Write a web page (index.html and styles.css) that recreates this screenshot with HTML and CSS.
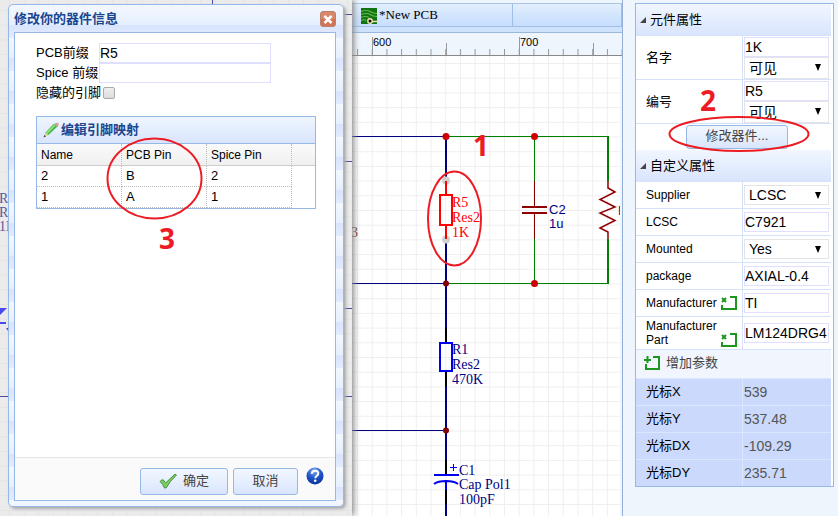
FILE: index.html
```html
<!DOCTYPE html>
<html lang="zh-CN">
<head>
<meta charset="utf-8">
<title>New PCB</title>
<link rel="stylesheet" href="styles.css">
</head>
<body>
<div class="app">
  <div class="backdrop">
    <svg class="sheet" aria-hidden="true">
      <defs>
        <pattern id="gridGray" x="9" y="10" width="14.7" height="14.7" patternUnits="userSpaceOnUse"><path d="M0 .5H15M.5 0V15" stroke="#e4e4e4" fill="none"/></pattern>
      </defs>
      <rect width="100%" height="100%" fill="url(#gridGray)"/>
      <g stroke="#4a4aa4" fill="none"><path d="M212.500 0V5M340 14.500H352M340 161.500H352M340 308.500H352M0 396.500H9M340 396.500H352"/></g>
      <path d="M0 308H7L0 315ZM0 322H6V324H0ZM6 328l2 3V328z" fill="#4a4af0"/>
      <g class="serif" fill="#5a5aa0"><text x="-1" y="203">R3</text><text x="-1" y="217">Res2</text><text x="-1" y="231">1K</text></g>
    </svg>

    <form class="dialog">
      <header class="dialog-head">
        <h1>修改你的器件信息</h1>
        <button class="close" type="button" aria-label="关闭">
          <svg width="16" height="16" viewBox="0 0 16 16"><rect x=".5" y=".5" width="15" height="15" rx="2.500" fill="#d9876b" stroke="#b9806c"/><path d="M1 8h14v5q0 2-2 2H3q-2 0-2-2z" fill="#cf6847" opacity=".6"/><path d="M4.500 5l7 7M11.500 5l-7 7" stroke="#fff" stroke-width="2.600"/></svg>
        </button>
      </header>
      <div class="dialog-body">
        <div class="dialog-content">
          <div class="field"><label for="pcb">PCB前缀</label><input id="pcb" type="text" value="R5"></div>
          <div class="field"><label for="spice">Spice 前缀</label><input id="spice" type="text"></div>
          <div class="field check"><label for="hide">隐藏的引脚</label><input id="hide" type="checkbox"></div>
          <section class="pins">
            <h2>
              <svg width="16" height="16" viewBox="0 0 16 16"><path d="M1 15l1.500-4.500L10.500 2l3.500-.500L15 4 6 12.500z" fill="#48b648"/><path d="M3 10.500L11.500 2l1.500 1L4.500 12z" fill="#8fe07a"/><path d="M12 1.500l3-1 .8 2.500-1.800 2z" fill="#d9a097"/><path d="M1 15l1.500-4.500L5.500 13z" fill="#d9dba0"/><path d="M.5 15.500l1-2.500 1.500 1.500z" fill="#444"/></svg>
              编辑引脚映射
            </h2>
            <table>
              <thead><tr><th>Name</th><th>PCB Pin</th><th>Spice Pin</th><th class="rest"></th></tr></thead>
              <tbody>
                <tr><td>2</td><td>B</td><td>2</td><td class="rest"></td></tr>
                <tr><td>1</td><td>A</td><td>1</td><td class="rest"></td></tr>
              </tbody>
            </table>
          </section>
        </div>
        <footer class="dialog-foot">
          <button class="btn ok" type="button"><svg width="18" height="16" viewBox="0 0 18 16"><path d="M1 8.500Q3 6 4.500 7L6.500 10 16 1.200 17.500 2Q11 8 7 15H5.500Q4 11 1 8.500z" fill="#7ccd62" stroke="#47913f"/></svg>确定</button>
          <button class="btn cancel" type="button">取消</button>
          <button class="help" type="button" aria-label="帮助">
            <svg width="18" height="18" viewBox="0 0 18 18"><defs><radialGradient id="ball" cx=".45" cy=".2" r=".8"><stop offset="0" stop-color="#8fb2ee"/><stop offset=".5" stop-color="#2158cc"/><stop offset="1" stop-color="#0a3298"/></radialGradient></defs><circle cx="9" cy="9" r="8.500" fill="url(#ball)"/><path d="M5.800 6.800Q6 3.800 9.200 3.800T12.300 6.600Q12.300 8 10.800 8.900T9.300 11.200" fill="none" stroke="#fff" stroke-width="2"/><circle cx="9.200" cy="13.700" r="1.300" fill="#fff"/></svg>
          </button>
        </footer>
      </div>
    </form>
  </div>

  <main class="editor">
    <nav class="tabs">
      <a class="tab" href="#pcb-sheet">
        <svg width="16" height="16" viewBox="0 0 16 16"><path d="M0 0h16v16H0z" fill="#127312"/><path d="M0 3.500q6-2 9 0t7 2M0 6.500q6-2 9 0t7 2M0 9.500q5-2 8 0M0 12.500q3-1.500 5 0" fill="none" stroke="#64b84c" stroke-width="1.200"/><circle cx="9" cy="13" r="2.200" fill="#111" stroke="#f2e6b8" stroke-width="1.400"/><path d="M11 13.500h5" stroke="#f2e6b8" stroke-width="1.400"/></svg>
        <span>*New PCB</span>
      </a>
      <span class="tab-space"></span>
    </nav>
    <svg class="ruler" aria-hidden="true">
      <defs><pattern id="ticks" x="5" y="0" width="14.7" height="22" patternUnits="userSpaceOnUse"><path d="M.5 16V22" stroke="#999"/></pattern></defs>
      <rect width="100%" height="22" fill="url(#ticks)"/>
      <path d="M20.500 4V22M167.500 4V22M94.500 10V22M241.500 10V22" stroke="#999"/>
      <text x="21" y="13">600</text><text x="168" y="13">700</text>
    </svg>
    <svg class="schematic" id="pcb-sheet">
      <defs>
        <pattern id="grid" x="5" y="7" width="14.7" height="14.7" patternUnits="userSpaceOnUse"><path d="M0 .5H15M.5 0V15" stroke="#efefef" fill="none"/></pattern>
      </defs>
      <rect width="100%" height="100%" fill="url(#grid)"/>
      <g transform="translate(-352 -56)" fill="none">
        <path d="M352 136.500H446M352 283.500H446M352 430.500H446" stroke="#000080"/>
        <path d="M446 136V181M446 239V328M446 385V460M446 503V516" stroke="#000080" stroke-width="2"/>
        <path d="M446 136.500H608M446 283.500H608M534.500 136V182M534.500 239V283" stroke="#008000"/>
        <path d="M608 136V181M608 239V284" stroke="#008000" stroke-width="2"/>
        <circle cx="446" cy="180.500" r="4" fill="#d0d0d0"/><circle cx="446" cy="239.500" r="4" fill="#d0d0d0"/>
        <path d="M446 181V195M446 225V239M440 195H452V225H440Z" stroke="#f00" stroke-width="2"/>
        <path d="M534.500 181V207M534.500 213V239" stroke="#800000"/>
        <path d="M522 207H547M522 213H547" stroke="#900000" stroke-width="2"/>
        <path d="M608 181V188L615 192 600 199.500 615 207 600 213 615 220.500 600 228 608 232V239" stroke="#900000" stroke-width="1.500"/>
        <path d="M446 328V343M446 371V386M446 460V474M446 490V504" stroke="#000" stroke-width="2"/>
        <path d="M440 343H452V371H440ZM434 475H459M446 481V490M434 484Q438 481 446 481T458 484" stroke="#0000f0" stroke-width="2"/>
        <path d="M450 467.500H457M453.500 464V471" stroke="#0000f0"/>
        <g fill="#c00"><circle cx="446" cy="136.500" r="3.500"/><circle cx="534.500" cy="136.500" r="3.500"/><circle cx="534.500" cy="283.500" r="3.500"/></g>
        <g fill="#800000"><circle cx="446" cy="283.500" r="3"/><circle cx="446" cy="430.500" r="3"/></g>
        <g class="serif" fill="#f00"><text x="452" y="207">R5</text><text x="452" y="222">Res2</text><text x="452" y="237">1K</text></g>
        <g class="serif" fill="#000080"><text x="452" y="354">R1</text><text x="452" y="369">Res2</text><text x="452" y="384">470K</text><text x="459" y="475">C1</text><text x="459" y="489">Cap Pol1</text><text x="459" y="504">100pF</text></g>
        <text class="serif" x="351" y="237" fill="#804020">3</text>
        <g class="sans" fill="#000080"><text x="549" y="214">C2</text><text x="549" y="228">1u</text><text x="618" y="215" fill="#800040">R</text></g>
      </g>
    </svg>
  </main>

  <aside class="side">
    <form class="props">
      <h2 class="group"><i class="caret"></i>元件属性</h2>
      <div class="row pair">
        <label for="name">名字</label>
        <div class="value"><input id="name" type="text" value="1K"><span class="select"><select aria-label="名字可见"><option>可见</option></select></span></div>
      </div>
      <div class="row pair">
        <label for="num">编号</label>
        <div class="value"><input id="num" type="text" value="R5"><span class="select"><select aria-label="编号可见"><option>可见</option></select></span></div>
      </div>
      <div class="action"><button class="btn modify" type="button">修改器件...</button></div>
      <h2 class="group"><i class="caret"></i>自定义属性</h2>
      <div class="row"><label for="sup">Supplier</label><div class="value"><span class="select"><select id="sup"><option>LCSC</option></select></span></div></div>
      <div class="row"><label for="lcsc">LCSC</label><div class="value"><input id="lcsc" type="text" value="C7921"></div></div>
      <div class="row"><label for="mnt">Mounted</label><div class="value"><span class="select"><select id="mnt"><option>Yes</option></select></span></div></div>
      <div class="row"><label for="pkg">package</label><div class="value"><input id="pkg" type="text" value="AXIAL-0.4"></div></div>
      <div class="row"><label for="man">Manufacturer<svg class="mark" width="16" height="14" viewBox="0 0 16 14"><path d="M1 9V13H15V1H9M1 2l4 4M5 2L1 6" fill="none" stroke="#1c961c" stroke-width="2"/></svg></label><div class="value"><input id="man" type="text" value="TI"></div></div>
      <div class="row tall"><label for="part"><span>Manufacturer Part</span><svg class="mark" width="16" height="14" viewBox="0 0 16 14"><path d="M1 9V13H15V1H9M1 2l4 4M5 2L1 6" fill="none" stroke="#1c961c" stroke-width="2"/></svg></label><div class="value"><input id="part" type="text" value="LM124DRG4"></div></div>
      <button class="add" type="button"><svg width="16" height="14" viewBox="0 0 16 14"><path d="M2 8V13H15V1H9M0 4H7M3.500 0V7" fill="none" stroke="#1c961c" stroke-width="2"/></svg>增加参数</button>
      <div class="row cursor"><span class="key">光标X</span><output>539</output></div>
      <div class="row cursor"><span class="key">光标Y</span><output>537.48</output></div>
      <div class="row cursor"><span class="key">光标DX</span><output>-109.29</output></div>
      <div class="row cursor"><span class="key">光标DY</span><output>235.71</output></div>
    </form>
  </aside>

  <svg class="notes">
    <g fill="none" stroke="#ed1c24" stroke-width="2"><ellipse cx="454.500" cy="218.500" rx="26.500" ry="47"/><ellipse cx="739" cy="134" rx="69.500" ry="17"/><ellipse cx="154.500" cy="178.500" rx="47" ry="40"/></g>
    <text x="473" y="156">1</text><text x="700" y="111">2</text><text x="159" y="249">3</text>
  </svg>
</div>
</body>
</html>
```
FILE: styles.css
```css
* { box-sizing: border-box; }
body { margin: 0; background: #eef5fd; color: #000; font: 12px/16px "Liberation Sans", "Noto Sans CJK SC", sans-serif; }
h1, h2 { margin: 0; font-size: 13px; }
input, select, button { margin: 0; font-family: inherit; color: inherit; }
button { padding: 0; border: 0; background: none; }
svg { display: block; flex: none; }

.app { position: relative; display: grid; grid-template-columns: 352px 1fr 215px; min-height: 100vh; overflow: hidden; }
.serif { font: 14px "Liberation Serif", serif; }
.sans { font: 13px "Liberation Sans", sans-serif; }

/* Dimmed sheet behind the dialog */
.backdrop { position: relative; z-index: 1; background: #ebebeb; box-shadow: 2px 0 6px #888; }
.sheet { position: absolute; inset: 0; width: 100%; height: 100%; }

.dialog { position: absolute; top: 4px; right: 8px; bottom: 9px; left: 8px; display: flex; flex-direction: column; padding: 0 7px 5px 5px; border: 1px solid #95b8e7; border-radius: 5px; background: linear-gradient(#f3f8ff, #e6effe 60%, #d8e4fd 61%, #e2ebff) 0 0 / 100% 33px; box-shadow: 2px 2px 3px #aaa; }
.dialog-head { display: flex; align-items: center; justify-content: space-between; height: 27px; color: #1a4690; }
.dialog-head h1 { padding-top: 1px; }
.close { height: 16px; }
.dialog-body { flex: 1; display: flex; flex-direction: column; border: 1px solid #95b8e7; background: #fff; }
.dialog-content { flex: 1; padding: 10px 19px 0 21px; }
.field { display: grid; grid-template-columns: 63px 172px; align-items: center; height: 20px; font-size: 13px; }
.field label { white-space: nowrap; }
.field input[type="text"] { width: 172px; height: 20px; padding: 0; border: 1px solid #dfdfff; background: #fff; font-size: 14px; }
.field.check { display: flex; gap: 2px; }
.field input[type="checkbox"] { appearance: none; width: 12px; height: 12px; border: 1px solid #aaa; border-radius: 2px; background: linear-gradient(#eee, #dcdcdc); }

.pins { margin-top: 13px; border: 1px solid #95b8e7; }
.pins h2 { display: flex; align-items: center; gap: 2px; height: 27px; padding-left: 6px; border-bottom: 1px solid #95b8e7; background: linear-gradient(#eff6ff, #d9e5fd); color: #1a4690; }
.pins table { width: 100%; border-collapse: separate; border-spacing: 0; table-layout: fixed; }
.pins th, .pins td { width: 85px; height: 22px; padding: 0 4px; border-right: 1px dotted #bbb; border-bottom: 1px dotted #bbb; text-align: left; font-weight: 400; }
.pins th { border-bottom: 1px solid #ccc; background: linear-gradient(#fafafa, #f0f0f0); }
.pins td { height: 21px; font-size: 13px; }
.pins .rest { width: auto; border-right: 0; }
.pins td.rest { border-bottom: 0; }

.dialog-foot { display: flex; align-items: flex-start; height: 43px; padding: 10px 11px 0; border-top: 1px solid #e6e6e6; background: #fafafa; justify-content: flex-end; }
.btn { display: flex; align-items: center; justify-content: center; height: 27px; border: 1px solid #95b8e7; border-radius: 3px; background: linear-gradient(#f2f7ff, #e6effe 50%, #d9e5fd); color: #444; font-size: 13px; line-height: 16px; padding-bottom: 2px; }
.ok { width: 88px; gap: 6px; margin-right: 5px; }
.cancel { width: 65px; }
.help { height: 18px; margin: -1px 0 0 8px; }

/* Editor */
.editor { display: flex; flex-direction: column; padding-top: 3px; border-right: 1px solid #95b0d8; }
.tabs { display: flex; height: 30px; padding-bottom: 5px; border-top: 1px solid #a9c6e8; border-bottom: 1px solid #9ab8dc; background: #cfe2fb; }
.tab, .tab-space { border-right: 1px solid #9fbfe4; border-bottom: 1px solid #9fbfe4; background: linear-gradient(#e3effd, #d3e5fd 50%, #c7deff); }
.tab { display: flex; align-items: center; gap: 2px; width: 161px; padding: 1px 0 0 9px; color: #000; text-decoration: none; font: 13px "Liberation Serif", serif; }
.tab span { padding-bottom: 2px; }
.tab-space { flex: 1; }
.ruler { width: 100%; height: 23px; border-bottom: 1px solid #888; font-size: 11px; }
.schematic { width: 100%; flex: 1; background: #fff; border-right: 2px solid #eef5fd; }

/* Property panel */
.side { padding: 3px 4px 0 12px; }
.props { padding-right: 2px; border: 1px solid #95b8e7; background: #fff; }
.group { display: flex; align-items: center; gap: 4px; height: 31px; padding-left: 4px; background: linear-gradient(#f1f6ff, #d9e5fd); font-weight: 400; }
.caret { border-left: 6px solid transparent; border-bottom: 6px solid #444; }
.row { display: grid; grid-template-columns: 107px 1fr; height: 27px; border-top: 1px solid #d5e2fa; }
.row label, .key { display: flex; align-items: center; padding-left: 10px; border-right: 1px solid #d5e2fa; line-height: 14px; }
.value { display: flex; flex-direction: column; justify-content: center; padding: 0 2px 0 1px; }
.value input { width: 100%; height: 20px; padding: 0; border: 1px solid #dfdfff; background: #fff; font-size: 14px; }
.select { position: relative; display: block; height: 20px; }
.select select { appearance: none; width: 100%; height: 100%; padding: 0 4px; border: 1px solid #e4e4e4; background: #fff; font-size: 14px; }
.select::after { content: ""; position: absolute; top: 7px; right: 8px; border: 3px solid transparent; border-top: 7px solid #000; border-bottom: 0; }
.pair { height: 44px; }
.pair label, .key { font-size: 13px; }
.pair .select { height: 22px; }
.tall { height: 33px; }
.tall .mark { align-self: flex-end; margin: 0 0 2px; }
.tall label span { width: 75px; }
.mark { margin-left: 4px; }
.action { display: flex; justify-content: center; height: 27px; padding: 1px 0 0 7px; border-top: 1px solid #d5e2fa; }
.modify { width: 102px; height: 24px; }
.add { display: flex; align-items: center; gap: 6px; width: 100%; height: 29px; padding: 0 0 3px 8px; border-top: 1px solid #d5e2fa; background: #f0f5fe; color: #444; font-size: 13px; line-height: 16px; }
.cursor { background: #cad9fc; border-color: #dbe6ff; }
.cursor .key { border-color: #dbe6ff; }
.cursor output { align-self: center; padding-left: 1px; color: #555; font-size: 14px; }

/* Markup over the page */
.notes { position: absolute; inset: 0; z-index: 2; width: 100%; height: 100%; pointer-events: none; fill: #ed1c24; font: bold 28px "Open Sans", sans-serif; }
```
